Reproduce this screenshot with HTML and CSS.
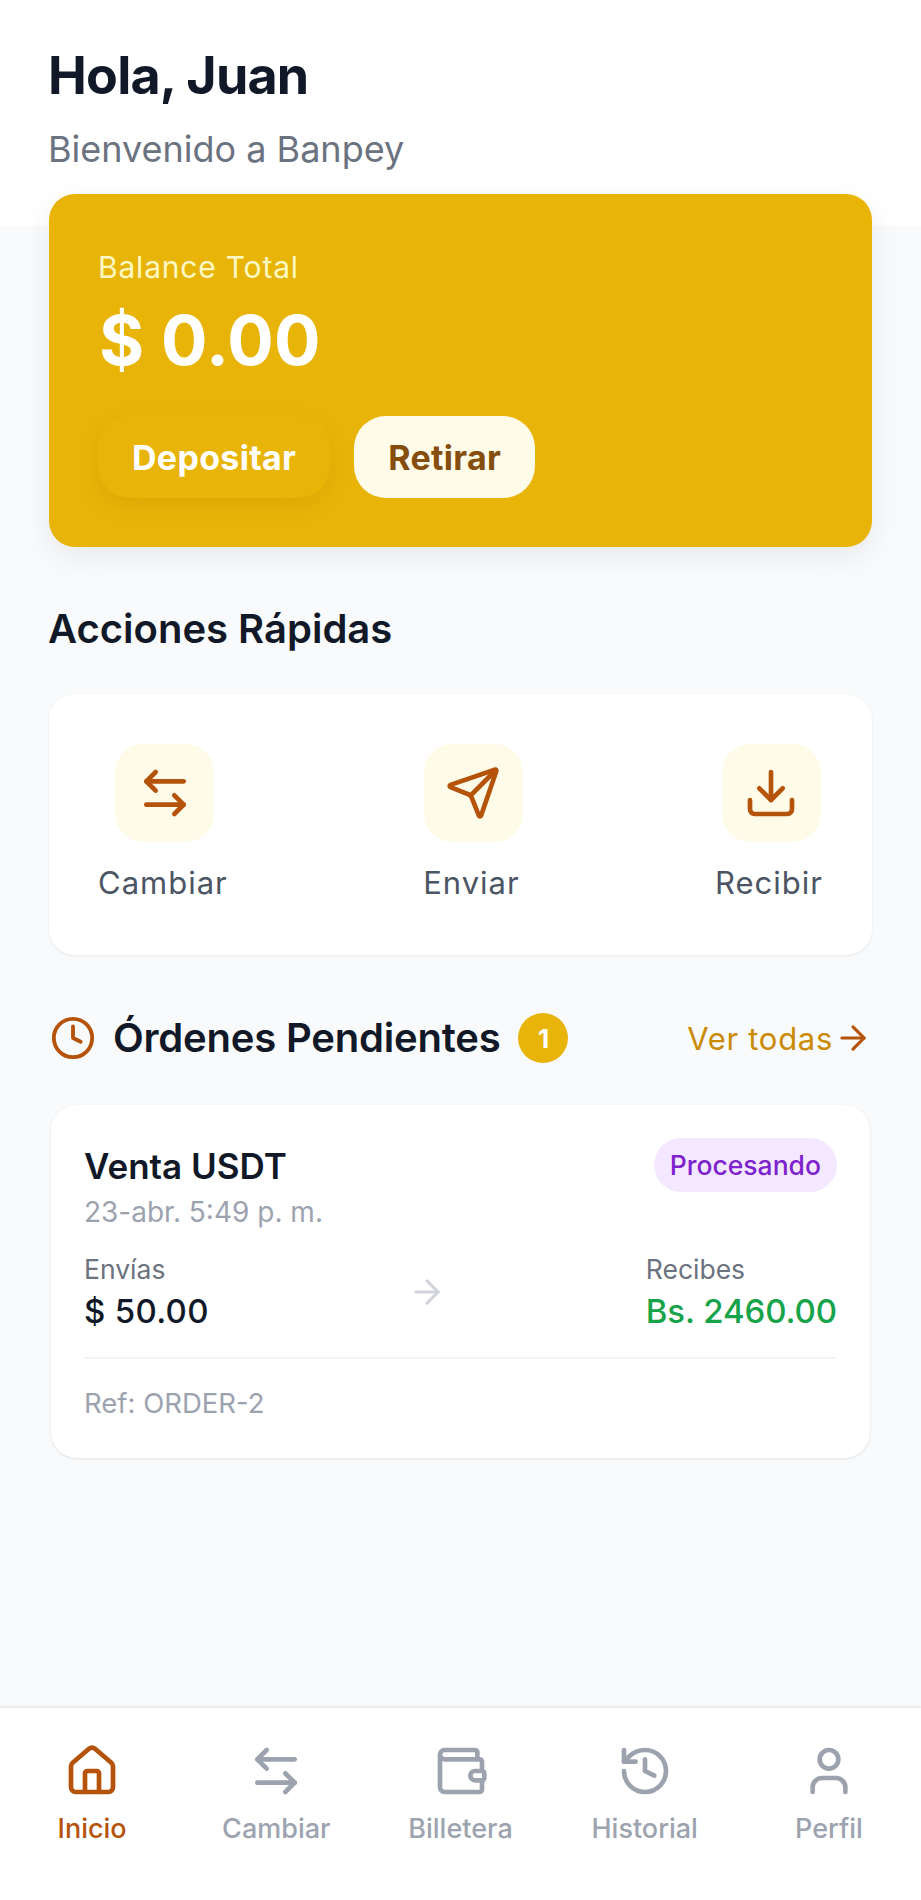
FILE: index.html
```html
<!DOCTYPE html>
<html lang="es">
<head>
<meta charset="utf-8">
<title>Banpey</title>
<link rel="stylesheet" href="styles.css">
</head>
<body>
<div class="app">
  <header class="header">
    <h1 class="title">Hola, Juan</h1>
    <p class="subtitle">Bienvenido a Banpey</p>
  </header>
  <main class="content">
    <section class="balance">
      <div class="balance-label">Balance Total</div>
      <div class="balance-value">$ 0.00</div>
      <div class="balance-actions">
        <button class="btn btn-primary">Depositar</button>
        <button class="btn btn-light">Retirar</button>
      </div>
    </section>
    <h2 class="section-title">Acciones Rápidas</h2>
    <section class="actions">
      <div class="action">
        <div class="action-icon"><svg class="icon-lg" viewBox="0 0 24 24"><path d="M8 3 4 7l4 4"/><path d="M4 7h16"/><path d="m16 21 4-4-4-4"/><path d="M20 17H4"/></svg></div>
        <span class="action-label">Cambiar</span>
      </div>
      <div class="action">
        <div class="action-icon"><svg class="icon-lg" viewBox="0 0 24 24"><path d="M14.536 21.686a.5.5 0 0 0 .937-.024l6.5-19a.496.496 0 0 0-.635-.635l-19 6.5a.5.5 0 0 0-.024.937l7.93 3.18a2 2 0 0 1 1.112 1.11z"/><path d="m21.854 2.147-10.94 10.939"/></svg></div>
        <span class="action-label">Enviar</span>
      </div>
      <div class="action">
        <div class="action-icon"><svg class="icon-lg" viewBox="0 0 24 24"><path d="M21 15v4a2 2 0 0 1-2 2H5a2 2 0 0 1-2-2v-4"/><path d="m7 10 5 5 5-5"/><path d="M12 15V3"/></svg></div>
        <span class="action-label">Recibir</span>
      </div>
    </section>
    <div class="orders-head">
      <svg class="icon-clock" viewBox="0 0 24 24"><circle cx="12" cy="12" r="10"/><path d="M12 6v6l4 2"/></svg>
      <h2 class="orders-title">Órdenes Pendientes</h2>
      <span class="count">1</span>
      <a class="see-all">Ver todas<svg class="icon-arrow" viewBox="0 0 24 24"><path d="M5 12h14"/><path d="m12 5 7 7-7 7"/></svg></a>
    </div>
    <article class="order">
      <div class="order-top">
        <div>
          <div class="order-name">Venta USDT</div>
          <div class="order-date">23-abr. 5:49 p. m.</div>
        </div>
        <span class="status">Procesando</span>
      </div>
      <div class="order-amounts">
        <div>
          <div class="amount-label">Envías</div>
          <div class="amount">$ 50.00</div>
        </div>
        <svg class="icon-sep" viewBox="0 0 24 24"><path d="M5 12h14"/><path d="m12 5 7 7-7 7"/></svg>
        <div>
          <div class="amount-label">Recibes</div>
          <div class="amount amount-green">Bs. 2460.00</div>
        </div>
      </div>
      <div class="order-ref">Ref: ORDER-2</div>
    </article>
  </main>
  <nav class="nav">
    <div class="nav-item active">
      <svg class="nav-icon" viewBox="0 0 24 24"><path d="M15 21v-8a1 1 0 0 0-1-1h-4a1 1 0 0 0-1 1v8"/><path d="M3 10a2 2 0 0 1 .71-1.53l7-6a2 2 0 0 1 2.58 0l7 6A2 2 0 0 1 21 10v9a2 2 0 0 1-2 2H5a2 2 0 0 1-2-2z"/></svg>
      <span>Inicio</span>
    </div>
    <div class="nav-item">
      <svg class="nav-icon" viewBox="0 0 24 24"><path d="M8 3 4 7l4 4"/><path d="M4 7h16"/><path d="m16 21 4-4-4-4"/><path d="M20 17H4"/></svg>
      <span>Cambiar</span>
    </div>
    <div class="nav-item">
      <svg class="nav-icon" viewBox="0 0 24 24"><path d="M19 7V4a1 1 0 0 0-1-1H5a2 2 0 0 0 0 4h15a1 1 0 0 1 1 1v4h-3a2 2 0 0 0 0 4h3a1 1 0 0 0 1-1v-2a1 1 0 0 0-1-1"/><path d="M3 5v14a2 2 0 0 0 2 2h15a1 1 0 0 0 1-1v-4"/></svg>
      <span>Billetera</span>
    </div>
    <div class="nav-item">
      <svg class="nav-icon" viewBox="0 0 24 24"><path d="M3 12a9 9 0 1 0 9-9 9.75 9.75 0 0 0-6.74 2.74L3 8"/><path d="M3 3v5h5"/><path d="M12 7v5l4 2"/></svg>
      <span>Historial</span>
    </div>
    <div class="nav-item">
      <svg class="nav-icon" viewBox="0 0 24 24"><path d="M19 21v-2a4 4 0 0 0-4-4H9a4 4 0 0 0-4 4v2"/><circle cx="12" cy="7" r="4"/></svg>
      <span>Perfil</span>
    </div>
  </nav>
</div>
</body>
</html>
```
FILE: styles.css
```css
* { box-sizing: border-box; }
html, body { margin: 0; padding: 0; }
body { font-family: Inter, "Noto Sans", sans-serif; background: #f9fafb; color: #111827; }
svg { fill: none; stroke: currentColor; stroke-linecap: round; stroke-linejoin: round; stroke-width: 2; display: block; }
.app { height: 1900px; display: flex; flex-direction: column; overflow: hidden; }
.header { background: #fff; height: 226px; padding: 44px 49px 0; flex: none; }
.title { margin: 0 0 0 -1px; font-size: 52px; line-height: 64px; font-weight: 700; letter-spacing: -0.8px; color: #111827; }
.subtitle { margin: 18px 0 0 -1px; font-size: 36px; line-height: 46px; color: #6b7280; }
.content { flex: 1; padding: 0 49px; margin-top: -32px; min-height: 0; }
.balance { height: 353px; background: #e8b408; border-radius: 26px; padding: 53px 49px 0; box-shadow: 0 10px 30px rgba(0,0,0,.07); }
.balance-label { font-size: 30px; line-height: 40px; letter-spacing: .8px; color: #fef9c3; }
.balance-value { font-size: 69px; line-height: 84px; font-weight: 700; letter-spacing: .3px; color: #fff; margin: 11px 0 0 1px; }
.balance-actions { display: flex; gap: 24px; margin-top: 34px; }
.btn { height: 82px; border: 0; border-radius: 32px; padding: 0 34px; font: 700 34px Inter, sans-serif; letter-spacing: .3px; }
.btn-primary { background: #e8b408; color: #fff; box-shadow: 0 8px 18px rgba(180,130,0,.22); }
.btn-light { background: #fefce8; color: #854d0e; }
.section-title { margin: 54px 0 0 -1px; font-size: 40px; line-height: 56px; font-weight: 600; color: #111827; }
.actions { margin-top: 37px; height: 261px; background: #fff; border-radius: 26px; padding: 50px 49px 0; display: flex; justify-content: space-between; box-shadow: 0 1px 3px rgba(0,0,0,.08); }
.action { display: flex; flex-direction: column; align-items: center; gap: 19px; }
.action-icon { width: 99px; height: 98px; margin-left: 4px; border-radius: 28px; background: #fefce8; color: #b45309; display: flex; align-items: center; justify-content: center; }
.icon-lg { width: 56px; height: 56px; }
.action-label { font-size: 31px; line-height: 44px; letter-spacing: 1px; color: #4b5563; }
.orders-head { display: flex; align-items: center; margin-top: 55px; height: 56px; padding-left: 1px; }
.icon-clock { width: 46px; height: 46px; color: #b45309; }
.orders-title { margin: 0 0 0 17px; font-size: 40px; line-height: 56px; font-weight: 600; letter-spacing: -.2px; }
.count { margin-left: 18px; width: 50px; height: 50px; border-radius: 50%; background: #e8b408; color: #fff; font-size: 26px; font-weight: 700; display: flex; align-items: center; justify-content: center; }
.see-all { margin-left: auto; display: flex; align-items: center; gap: 1px; font-size: 31px; letter-spacing: .7px; color: #ca8a04; }
.icon-arrow { width: 38px; height: 38px; color: #b45309; }
.order { margin: 39px 2px 0; height: 353px; background: #fff; border-radius: 26px; padding: 33px 33px 0; box-shadow: 0 1px 3px rgba(0,0,0,.1); }
.order-top { display: flex; justify-content: space-between; align-items: flex-start; }
.order-name { font-size: 35px; line-height: 50px; font-weight: 600; margin-top: 3px; }
.order-date { font-size: 28px; line-height: 40px; margin-top: 1px; color: #9ca3af; }
.status { height: 54px; padding: 0 16px; border-radius: 27px; background: #f3e8ff; color: #7e22ce; font-size: 26.5px; font-weight: 500; display: flex; align-items: center; }
.order-amounts { display: flex; justify-content: space-between; align-items: center; margin-top: 18px; padding-bottom: 23px; border-bottom: 2px solid #f3f4f6; }
.amount-label { font-size: 26.5px; line-height: 38px; color: #6b7280; }
.amount { font-size: 33px; line-height: 46px; font-weight: 500; letter-spacing: .3px; color: #111827; }
.amount-green { color: #16a34a; letter-spacing: -.1px; }
.icon-sep { width: 38px; height: 38px; color: #d1d5db; }
.order-ref { font-size: 27.5px; line-height: 38px; color: #9ca3af; margin-top: 25px; }
.nav { flex: none; height: 192px; background: #fff; display: flex; padding-top: 35px; box-shadow: 0 -1px 3px rgba(0,0,0,.12); }
.nav-item { flex: 1; display: flex; flex-direction: column; align-items: center; gap: 12px; color: #9ca3af; font-size: 27px; font-weight: 500; line-height: 36px; }
.nav-item.active { color: #b45309; }
.nav-icon { width: 56px; height: 56px; }
```
